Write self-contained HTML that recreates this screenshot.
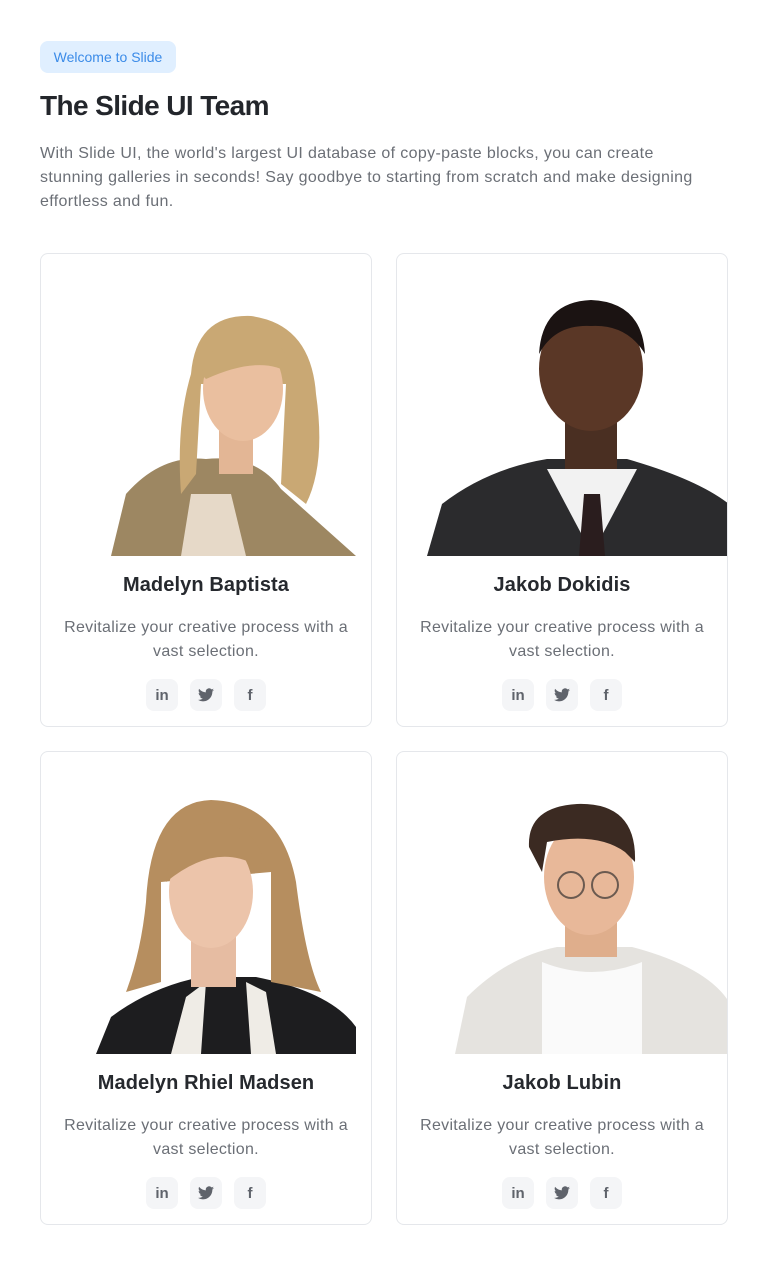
<!DOCTYPE html>
<html><head><meta charset="utf-8"><style>
*{box-sizing:border-box;margin:0;padding:0}
body{width:768px;height:1265px;background:#fff;font-family:"Liberation Sans",sans-serif;color:#1f2328;position:relative}
.badge{position:absolute;left:40px;top:41px;width:136px;height:32px;border-radius:8px;background:#e0efff;color:#3b8be8;font-size:14px;line-height:32px;text-align:center}
h1{position:absolute;left:40px;top:90px;font-size:28px;font-weight:bold;letter-spacing:-0.6px;color:#23262b}
.lead{position:absolute;left:40px;top:142px;width:680px;font-size:16px;line-height:24px;color:#6b6f76;letter-spacing:0.35px}
.card{position:absolute;width:332px;height:474px;border:1px solid #e5e7eb;border-radius:8px;overflow:hidden;background:#fff}
.card svg.ph{position:absolute;left:0;top:0}
.name{position:absolute;top:320px;width:100%;text-align:center;font-size:20px;font-weight:bold;color:#26292e;letter-spacing:0.1px}
.desc{position:absolute;top:362px;left:8px;right:8px;text-align:center;font-size:16px;line-height:24px;color:#6b6f76;letter-spacing:0.3px}
.icons{position:absolute;top:425px;left:105px;display:flex;gap:12px}
.icons span{width:32px;height:32px;border-radius:8px;background:#f4f5f7;display:flex;align-items:center;justify-content:center;color:#5f636b;font-weight:bold;font-size:15px}
</style></head><body>
<div class="badge">Welcome to Slide</div>
<h1>The Slide UI Team</h1>
<div class="lead">With Slide UI, the world's largest UI database of copy-paste blocks, you can create stunning galleries in seconds! Say goodbye to starting from scratch and make designing effortless and fun.</div>

<div class="card" style="left:40px;top:253px">
<svg class="ph" width="332" height="302"><path d="M70 302 L85 240 Q120 200 165 205 Q215 200 240 235 L315 302Z" fill="#9d8762"/><path d="M140 302 L150 240 L190 240 L205 302Z" fill="#e6d9c8"/><rect x="178" y="175" width="34" height="45" fill="#e3b695"/><path d="M150 120 Q155 60 210 62 Q270 70 275 140 Q285 210 265 250 L240 230 L245 130 L160 130 L155 220 L140 240 Q135 170 150 120Z" fill="#c9a874"/><ellipse cx="202" cy="135" rx="40" ry="52" fill="#eabf9f"/><path d="M160 120 Q175 75 215 78 Q245 85 250 120 Q220 100 165 125Z" fill="#c9a874"/></svg>
<div class="name">Madelyn Baptista</div>
<div class="desc">Revitalize your creative process with a vast selection.</div>
<div class="icons"><span>in</span><span><svg width="16" height="14" viewBox="0 0 24 20"><path fill="#5f636b" d="M24 2.4a10 10 0 0 1-2.8.8A5 5 0 0 0 23.3.4a10 10 0 0 1-3.1 1.2A4.9 4.9 0 0 0 11.8 6 14 14 0 0 1 1.7.9a4.9 4.9 0 0 0 1.5 6.6A4.9 4.9 0 0 1 1 6.9a4.9 4.9 0 0 0 3.9 4.9 5 5 0 0 1-2.2.1 4.9 4.9 0 0 0 4.6 3.4A9.9 9.9 0 0 1 0 17.3 14 14 0 0 0 7.5 19.5c9 0 14-7.5 14-14v-.6A10 10 0 0 0 24 2.4z"/></svg></span><span>f</span></div>
</div>

<div class="card" style="left:396px;top:253px">
<svg class="ph" width="332" height="302"><path d="M30 302 L45 250 Q90 215 150 205 L230 205 Q300 225 332 250 L332 302Z" fill="#2b2b2d"/><path d="M150 215 L195 300 L240 215Z" fill="#f2f2f2"/><path d="M187 240 L203 240 L208 302 L182 302Z" fill="#2a1d1e"/><rect x="168" y="160" width="52" height="55" fill="#4a2f22"/><ellipse cx="194" cy="115" rx="52" ry="62" fill="#5a3726"/><path d="M142 100 Q145 48 194 46 Q245 48 248 100 Q230 70 194 72 Q158 70 142 100Z" fill="#1b1312"/></svg>
<div class="name">Jakob Dokidis</div>
<div class="desc">Revitalize your creative process with a vast selection.</div>
<div class="icons"><span>in</span><span><svg width="16" height="14" viewBox="0 0 24 20"><path fill="#5f636b" d="M24 2.4a10 10 0 0 1-2.8.8A5 5 0 0 0 23.3.4a10 10 0 0 1-3.1 1.2A4.9 4.9 0 0 0 11.8 6 14 14 0 0 1 1.7.9a4.9 4.9 0 0 0 1.5 6.6A4.9 4.9 0 0 1 1 6.9a4.9 4.9 0 0 0 3.9 4.9 5 5 0 0 1-2.2.1 4.9 4.9 0 0 0 4.6 3.4A9.9 9.9 0 0 1 0 17.3 14 14 0 0 0 7.5 19.5c9 0 14-7.5 14-14v-.6A10 10 0 0 0 24 2.4z"/></svg></span><span>f</span></div>
</div>

<div class="card" style="left:40px;top:751px">
<svg class="ph" width="332" height="302"><path d="M55 302 L70 265 Q110 235 160 225 L215 225 Q290 240 315 275 L315 302Z" fill="#1d1d1f"/><path d="M130 302 L145 245 L165 230 L160 302Z M210 302 L205 230 L225 240 L235 302Z" fill="#efece6"/><rect x="150" y="180" width="45" height="55" fill="#e6bca2"/><path d="M105 150 Q110 50 170 48 Q240 50 255 130 Q265 210 280 240 L230 230 L230 120 L120 130 L120 230 L85 240 Q100 200 105 150Z" fill="#b68e5f"/><ellipse cx="170" cy="140" rx="42" ry="56" fill="#ecc4aa"/><path d="M125 130 Q130 70 175 70 Q220 75 225 120 Q180 85 125 130Z" fill="#b68e5f"/></svg>
<div class="name">Madelyn Rhiel Madsen</div>
<div class="desc">Revitalize your creative process with a vast selection.</div>
<div class="icons"><span>in</span><span><svg width="16" height="14" viewBox="0 0 24 20"><path fill="#5f636b" d="M24 2.4a10 10 0 0 1-2.8.8A5 5 0 0 0 23.3.4a10 10 0 0 1-3.1 1.2A4.9 4.9 0 0 0 11.8 6 14 14 0 0 1 1.7.9a4.9 4.9 0 0 0 1.5 6.6A4.9 4.9 0 0 1 1 6.9a4.9 4.9 0 0 0 3.9 4.9 5 5 0 0 1-2.2.1 4.9 4.9 0 0 0 4.6 3.4A9.9 9.9 0 0 1 0 17.3 14 14 0 0 0 7.5 19.5c9 0 14-7.5 14-14v-.6A10 10 0 0 0 24 2.4z"/></svg></span><span>f</span></div>
</div>

<div class="card" style="left:396px;top:751px">
<svg class="ph" width="332" height="302"><path d="M58 302 L70 245 Q110 205 160 195 L235 195 Q310 215 332 250 L332 302Z" fill="#e5e3df"/><path d="M145 302 L145 210 Q195 230 245 210 L245 302Z" fill="#fafafa"/><rect x="168" y="150" width="52" height="55" fill="#dfae8c"/><ellipse cx="192" cy="125" rx="45" ry="58" fill="#e8b899"/><path d="M132 95 Q130 55 180 52 Q240 50 238 110 L228 100 Q200 80 150 90 L145 120Z" fill="#3b2a22"/><circle cx="174" cy="133" r="13" fill="none" stroke="#6b5a50" stroke-width="2"/><circle cx="208" cy="133" r="13" fill="none" stroke="#6b5a50" stroke-width="2"/></svg>
<div class="name">Jakob Lubin</div>
<div class="desc">Revitalize your creative process with a vast selection.</div>
<div class="icons"><span>in</span><span><svg width="16" height="14" viewBox="0 0 24 20"><path fill="#5f636b" d="M24 2.4a10 10 0 0 1-2.8.8A5 5 0 0 0 23.3.4a10 10 0 0 1-3.1 1.2A4.9 4.9 0 0 0 11.8 6 14 14 0 0 1 1.7.9a4.9 4.9 0 0 0 1.5 6.6A4.9 4.9 0 0 1 1 6.9a4.9 4.9 0 0 0 3.9 4.9 5 5 0 0 1-2.2.1 4.9 4.9 0 0 0 4.6 3.4A9.9 9.9 0 0 1 0 17.3 14 14 0 0 0 7.5 19.5c9 0 14-7.5 14-14v-.6A10 10 0 0 0 24 2.4z"/></svg></span><span>f</span></div>
</div>
</body></html>
